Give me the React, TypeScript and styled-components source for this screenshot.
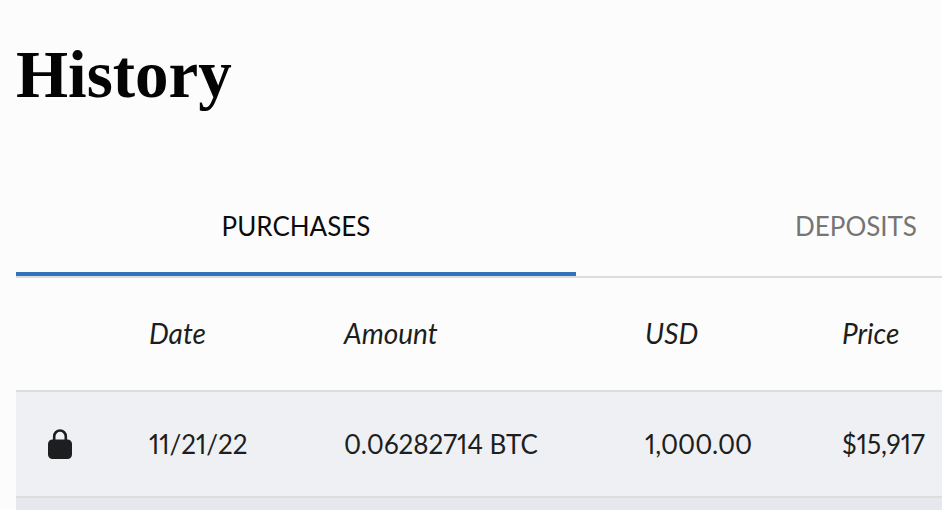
import React from "react";
import styled, { createGlobalStyle } from "styled-components";

const GlobalStyle = createGlobalStyle`
  * { box-sizing: border-box; }
  html, body { margin: 0; }
  body {
    background: #fcfcfc;
    color: #1c1e20;
    font-family: Lato, "Open Sans", sans-serif;
    font-size: 28px;
    line-height: 36px;
  }
`;

const Page = styled.main`
  height: 100vh;
  padding: 38px 0 0 16px;
  overflow: hidden;
`;

const Title = styled.h1`
  margin: 0 0 66px;
  color: #040404;
  font-family: "Liberation Serif", serif;
  font-size: 67px;
  line-height: 72px;
  font-weight: 700;
`;

const History = styled.section`
  width: 100%;
  min-width: 1120px;
`;

const Tabs = styled.div`
  display: grid;
  grid-template-columns: 1fr 1fr;
  border-bottom: 2px solid #dddddf;
`;

const Tab = styled.button<{ $active?: boolean }>`
  height: 100px;
  padding: 4px 0 0;
  border: 0;
  border-bottom: 4px solid ${(p) => (p.$active ? "#3472ba" : "transparent")};
  background: none;
  color: ${(p) => (p.$active ? "#0c0c0c" : "#757575")};
  font: inherit;
  font-size: 26px;
`;

const Table = styled.table`
  width: 100%;
  table-layout: fixed;
  border-collapse: separate;
  border-spacing: 0;
`;

const HeadCell = styled.th<{ $width?: number }>`
  width: ${(p) => (p.$width ? `${p.$width}px` : "auto")};
  height: 112px;
  padding: 0 0 2px;
  text-align: left;
  font-weight: 400;
  font-style: italic;
`;

const Cell = styled.td`
  height: 106px;
  padding: 0;
  border-top: 2px solid #dddddf;
  font-size: 26px;
  font-variant-numeric: proportional-nums;
  white-space: nowrap;
`;

const Row = styled.tr`
  background: #eff0f4;
  &:nth-child(even) { background: #e6e8ed; }
`;

const Lock = styled.svg`
  display: block;
  width: 24px;
  height: 30px;
  margin-left: 32px;
`;

const LockIcon = () => (
  <Lock viewBox="0 0 24 30" role="img" aria-label="Locked">
    <path d="M6.200 12V7.500a5.800 6 0 0 1 11.600 0V12" fill="none" stroke="#1c1e20" strokeWidth="2.600" />
    <rect x="0" y="10.500" width="24" height="19.500" rx="4.500" fill="#1c1e20" />
  </Lock>
);

export default function App() {
  return (
    <>
      <GlobalStyle />
      <Page>
        <Title>History</Title>
        <History>
          <Tabs role="tablist">
            <Tab role="tab" aria-selected="true" $active>PURCHASES</Tab>
            <Tab role="tab" aria-selected="false">DEPOSITS</Tab>
          </Tabs>
          <Table>
            <thead>
              <tr>
                <HeadCell $width={133} aria-label="Status" />
                <HeadCell $width={195}>Date</HeadCell>
                <HeadCell $width={301}>Amount</HeadCell>
                <HeadCell $width={197}>USD</HeadCell>
                <HeadCell>Price</HeadCell>
              </tr>
            </thead>
            <tbody>
              <Row>
                <Cell><LockIcon /></Cell>
                <Cell>11/21/22</Cell>
                <Cell>0.06282714 BTC</Cell>
                <Cell>1,000.00</Cell>
                <Cell>$15,917</Cell>
              </Row>
              <Row><Cell colSpan={5} /></Row>
            </tbody>
          </Table>
        </History>
      </Page>
    </>
  );
}
